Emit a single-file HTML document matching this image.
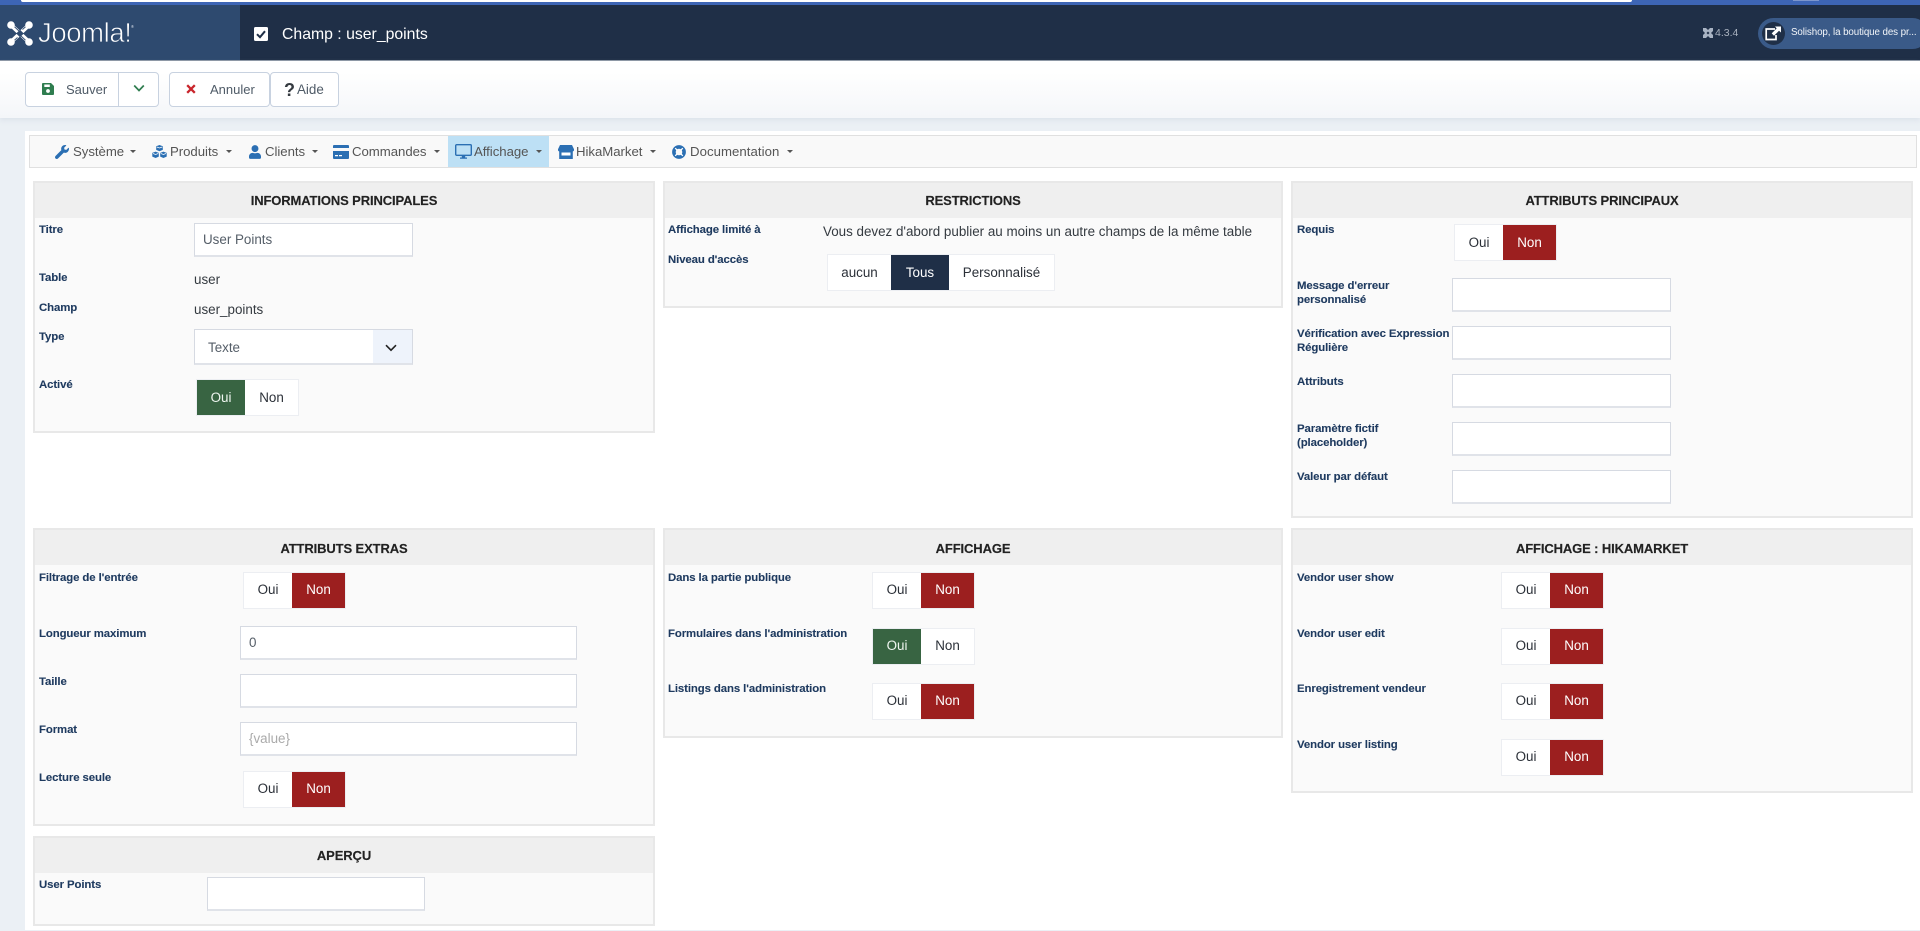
<!DOCTYPE html>
<html lang="fr"><head><meta charset="utf-8"><title>Champ : user_points</title>
<style>
*{box-sizing:border-box}
html,body{margin:0;padding:0;width:1920px;height:931px;overflow:hidden;background:#ebf0f5;font-family:"Liberation Sans",sans-serif}
.a,.l,.v,.h,.p,.tg,input,select,svg.i,.m,.c{position:absolute}
.a,.l,.v,.h,.m{white-space:nowrap}
.p{background:#fafafa;border:2px solid #e8e8e8}
.p>b{display:block;height:35px;background:#efefef;margin:0}
.h{font-weight:700;font-size:13px;line-height:16px;color:#222;text-align:center;letter-spacing:-.12px;-webkit-text-stroke:.15px #222;margin-top:.5px}
.l{font-weight:700;font-size:11.4px;line-height:14px;color:#1e3a5f;letter-spacing:-.1px;margin-top:.6px;-webkit-text-stroke:.1px #1e3a5f}
.v{font-size:13.4px;line-height:16px;color:#343a40;margin-top:1px}
input,select{background:#fff;border:1px solid #d6dae2;border-bottom:2px solid #e0e3e9;border-radius:0;height:34px;padding:0 8px;font:13.4px "Liberation Sans",sans-serif;color:#555e68;outline:none;margin:0}
input::placeholder{color:#aaa;opacity:1}
.tg{display:flex;height:37px;background:#fff;border:1px solid #eceef2;font-size:13.4px;line-height:35px;color:#2b3038;text-align:center}
.tg span{display:block;height:100%}
.tg .r{background:#9c1f1f;color:#fff}
.tg .g{background:#386442;color:#eef5ef}
.tg .d{background:#1f2f47;color:#fff}
.b{position:absolute;top:72px;height:35px;background:#fff;border:1px solid #c8d2e0;border-radius:4px}
.t{position:absolute;top:83px;line-height:14px;font-size:13px;color:#4f5b67;white-space:nowrap}
.m{top:144px;font-size:13.2px;line-height:16px;color:#555;letter-spacing:-.03px}
.c{top:150px;width:0;height:0;border-left:3px solid transparent;border-right:3px solid transparent;border-top:3.5px solid #555}
svg.i{fill:#2b6fb3}
</style></head><body>

<div class="a" style="left:0;top:0;width:1920px;height:5px;background:#3d65b5"></div>
<div class="a" style="left:21px;top:0;width:1611px;height:1.5px;background:#fff;border-radius:0 0 3px 3px"></div>
<div class="a" style="left:1793px;top:0;width:26px;height:1px;background:#7c95cc"></div>
<div class="a" style="left:0;top:5px;width:1920px;height:56px;background:#1f2f47;border-bottom:1px solid #8d97a5"></div>
<div class="a" style="left:0;top:5px;width:240px;height:55px;background:#2e4a6f"></div>

<svg class="i" style="left:7px;top:21px;fill:none" width="26" height="25" viewBox="0 0 26 25">
<g stroke="#fff" stroke-width="4.200" stroke-linecap="round" fill="none"><path d="M4.500 4.500L21.500 20.500M21.500 4.500L4.500 20.500"/></g>
<g fill="#fff"><circle cx="4" cy="4" r="3.800"/><circle cx="22" cy="4" r="3.800"/><circle cx="4" cy="21" r="3.800"/><circle cx="22" cy="21" r="3.800"/></g>
<path d="M13 8.800l3.800 3.700-3.800 3.700-3.800-3.700z" fill="#2e4a6f"/>
<path d="M7.500 5.800l5 4.700M18.500 19.200l-5-4.700M18.500 5.800l-3 2.800M7.500 19.200l3-2.800" stroke="#2e4a6f" stroke-width=".9" fill="none"/></svg>
<div class="a" style="left:38px;top:16px;font-size:27.5px;line-height:34px;color:#fff;letter-spacing:-.4px;-webkit-text-stroke:.7px #2e4a6f">Joomla!</div>
<div class="a" style="left:131px;top:24px;font-size:4px;line-height:5px;color:#dfe5ee">®</div>

<svg class="i" style="left:253px;top:26px;fill:none" width="16" height="16" viewBox="0 0 16 16"><rect x="1" y="1" width="14" height="14" rx="1.5" fill="#fff"/><path d="M4 8.200l3 3 5-6" stroke="#1f2f47" stroke-width="2" fill="none"/></svg>
<div class="a" style="left:282px;top:26px;font-size:15.8px;line-height:18px;color:#fff">Champ : user_points</div>

<svg class="i" style="left:1703px;top:28px;fill:#a9b4c4" width="10" height="10" viewBox="0 0 10 10"><path d="M0 0h3l2 2 2-2h3v3L8 5l2 2v3H7L5 8l-2 2H0V7l2-2-2-2z"/><path d="M5 3.500L6.500 5 5 6.500 3.500 5z" fill="#1f2f47"/></svg>
<div class="a" style="left:1715px;top:27px;font-size:10.5px;line-height:13px;color:#a9b2bf">4.3.4</div>
<div class="a" style="left:1758px;top:18px;width:170px;height:31px;border-radius:16px;background:#3a5a88"></div>
<div class="a" style="left:1762px;top:22px;width:23px;height:23px;border-radius:50%;background:#1f2f47"></div>
<svg class="i" style="left:1764px;top:26px;fill:none" width="18" height="15" viewBox="0 0 18 15"><path d="M11 3H2.200v10.500h9.800V9" stroke="#fff" stroke-width="1.700" fill="none"/><path d="M11 .5h6v6l-2-1.800-5 5-2.300-2.300 5-5z" fill="#fff"/></svg>
<div class="a" style="left:1791px;top:26px;font-size:9.8px;line-height:14px;letter-spacing:-.1px;color:#f2f5f9">Solishop, la boutique des pr...</div>

<div class="a" style="left:0;top:61px;width:1920px;height:57px;background:linear-gradient(#fff 20%,#f4f6f9);box-shadow:0 2px 5px rgba(170,185,205,.25)"></div>

<div class="b" style="left:25px;width:134px"></div>
<div class="a" style="left:118px;top:73px;width:1px;height:33px;background:#c8d2e0"></div>
<svg class="i" style="left:42px;top:83px;fill:#2f7d4f" width="12" height="12" viewBox="0 0 12 12"><path d="M0 1a1 1 0 0 1 1-1h8l3 3v8a1 1 0 0 1-1 1H1a1 1 0 0 1-1-1z"/><rect x="2.300" y="1.500" width="5.500" height="2.500" fill="#fff"/><circle cx="6" cy="8" r="1.900" fill="#fff"/></svg>
<div class="t" style="left:66px">Sauver</div>
<svg class="i" style="left:133px;top:84px;fill:none" width="12" height="9" viewBox="0 0 12 9"><path d="M1.200 1.500L6 6.500l4.800-5" stroke="#2f7d4f" stroke-width="1.700" fill="none"/></svg>
<div class="b" style="left:169px;width:101px"></div>
<svg class="i" style="left:186px;top:84px;fill:none" width="10" height="10" viewBox="0 0 10 10"><path d="M1.200 1.200l7.600 7.600M8.800 1.200L1.200 8.800" stroke="#c9252c" stroke-width="2.300"/></svg>
<div class="t" style="left:210px">Annuler</div>
<div class="b" style="left:270px;width:69px"></div>
<div class="t" style="left:284px;font-weight:700;font-size:18px;color:#343a40">?</div>
<div class="t" style="left:297px;font-size:13.4px">Aide</div>

<div class="a" style="left:25px;top:131px;width:1895px;height:799px;background:#fff"></div>

<div class="a" style="left:29px;top:135px;width:1888px;height:33px;background:#f9f9f9;border:1px solid #e0e0e0"></div>
<div class="a" style="left:448px;top:136px;width:101px;height:31px;background:#bde0f5"></div>

<svg class="i" style="left:55px;top:145px" width="14" height="14" viewBox="0 0 512 512"><path d="M507.730 109.100c-2.240-9.030-13.540-12.090-20.120-5.510l-74.360 74.360-67.880-11.310-11.310-67.880 74.360-74.360c6.620-6.620 3.430-17.900-5.660-20.160-47.380-11.740-99.550.91-136.580 37.930-39.640 39.640-50.550 97.100-34.050 147.200L18.740 402.760c-24.990 24.990-24.990 65.510 0 90.500 24.990 24.990 65.510 24.990 90.500 0l213.210-213.210c50.120 16.710 107.470 5.680 147.370-34.220 37.070-37.070 49.700-89.320 37.910-136.730z"/></svg>
<div class="m" style="left:73px">Système</div><div class="c" style="left:130px"></div>

<svg class="i" style="left:152px;top:145px" width="15" height="14" viewBox="0 0 15 14"><path d="M7.500 0l3.300 1.300v3.600L7.500 6.300 4.200 4.900V1.300zM3.600 6.600l3.200 1.300v3.700l-3.200 1.400L.3 11.600V7.900zM11.400 6.600l3.300 1.300v3.700L11.400 13l-3.200-1.400V7.900z"/><path d="M4.800 2l2.700 1 2.700-1M1 8.500l2.600 1 2.600-1M8.800 8.500l2.600 1 2.600-1" stroke="#fff" stroke-width=".7" fill="none"/></svg>
<div class="m" style="left:170px">Produits</div><div class="c" style="left:226px"></div>

<svg class="i" style="left:249px;top:145px" width="12" height="14" viewBox="0 0 448 512"><path d="M224 256c70.700 0 128-57.300 128-128S294.700 0 224 0 96 57.300 96 128s57.300 128 128 128zm89.600 32h-16.700c-22.200 10.200-46.900 16-72.900 16s-50.600-5.800-72.900-16h-16.700C60.200 288 0 348.200 0 422.400V464c0 26.500 21.500 48 48 48h352c26.500 0 48-21.500 48-48v-41.600c0-74.200-60.200-134.400-134.400-134.400z"/></svg>
<div class="m" style="left:265px">Clients</div><div class="c" style="left:312px"></div>

<svg class="i" style="left:333px;top:145px" width="16" height="14" viewBox="0 0 16 14"><path d="M1 0h14a1 1 0 0 1 1 1v2H0V1a1 1 0 0 1 1-1zM0 6h16v7a1 1 0 0 1-1 1H1a1 1 0 0 1-1-1z"/><path d="M2 10h3v1.300H2zM6 10h3v1.300H6z" fill="#fff"/></svg>
<div class="m" style="left:352px">Commandes</div><div class="c" style="left:434px"></div>

<svg class="i" style="left:455px;top:144px;fill:none" width="17" height="15" viewBox="0 0 17 15"><rect x=".7" y=".7" width="15.600" height="10.600" rx="1" stroke="#2b6fb3" stroke-width="1.400" fill="none"/><path d="M6.800 11.500h3.400v2H12v1.200H5v-1.200h1.800z" fill="#2b6fb3"/></svg>
<div class="m" style="left:474px">Affichage</div><div class="c" style="left:536px"></div>

<svg class="i" style="left:558px;top:145px" width="16" height="14" viewBox="0 0 16 14"><path d="M2 0h12l2 4.200a2 2 0 0 1-1.200 2.300V14H1.200V6.500A2 2 0 0 1 0 4.200z"/><rect x="3.500" y="7.500" width="9" height="3" fill="#fff"/></svg>
<div class="m" style="left:576px">HikaMarket</div><div class="c" style="left:650px"></div>

<svg class="i" style="left:672px;top:145px;fill:none" width="14" height="14" viewBox="0 0 14 14"><circle cx="7" cy="7" r="5.100" stroke="#2b6fb3" stroke-width="3.600" fill="none"/><path d="M3.200 3.200l2 2M10.800 3.200l-2 2M3.200 10.800l2-2M10.800 10.800l-2-2" stroke="#fff" stroke-width="1.300"/></svg>
<div class="m" style="left:690px;letter-spacing:.05px">Documentation</div><div class="c" style="left:787px"></div>

<!-- INFORMATIONS PRINCIPALES -->
<div class="p" style="left:33px;top:181px;width:622px;height:252px"><b></b></div>
<div class="h" style="left:33px;top:192px;width:622px">INFORMATIONS PRINCIPALES</div>
<div class="l" style="left:39px;top:222px">Titre</div>
<input style="left:194px;top:223px;width:219px" value="User Points">
<div class="l" style="left:39px;top:270px">Table</div>
<div class="v" style="left:194px;top:271px">user</div>
<div class="l" style="left:39px;top:300px">Champ</div>
<div class="v" style="left:194px;top:301px">user_points</div>
<div class="l" style="left:39px;top:329px">Type</div>
<div class="a" style="left:194px;top:329px;width:219px;height:36px;background:#fff;border:1px solid #d6dae2;border-bottom:2px solid #e0e3e9"></div>
<div class="a" style="left:373px;top:330px;width:39px;height:33px;background:#eef3fb"></div>
<div class="v" style="left:208px;top:339px;color:#555e68">Texte</div>
<svg class="i" style="left:385px;top:344px;fill:none" width="12" height="8" viewBox="0 0 12 8"><path d="M1 1.200l5 5 5-5" stroke="#222" stroke-width="1.600" fill="none"/></svg>
<div class="l" style="left:39px;top:377px">Activé</div>
<div class="tg" style="left:196px;top:379px;width:103px"><span class="g" style="width:48px">Oui</span><span style="width:53px">Non</span></div>

<!-- RESTRICTIONS -->
<div class="p" style="left:663px;top:181px;width:620px;height:127px"><b></b></div>
<div class="h" style="left:663px;top:192px;width:620px">RESTRICTIONS</div>
<div class="l" style="left:668px;top:222px">Affichage limité à</div>
<div class="v" style="left:823px;top:223px">Vous devez d'abord publier au moins un autre champs de la même table</div>
<div class="l" style="left:668px;top:252px">Niveau d'accès</div>
<div class="tg" style="left:827px;top:254px;width:228px"><span style="width:63px">aucun</span><span class="d" style="width:58px">Tous</span><span style="width:105px">Personnalisé</span></div>

<!-- ATTRIBUTS PRINCIPAUX -->
<div class="p" style="left:1291px;top:181px;width:622px;height:337px"><b></b></div>
<div class="h" style="left:1291px;top:192px;width:622px">ATTRIBUTS PRINCIPAUX</div>
<div class="l" style="left:1297px;top:222px">Requis</div>
<div class="tg" style="left:1454px;top:224px;width:103px"><span style="width:48px">Oui</span><span class="r" style="width:53px">Non</span></div>
<div class="l" style="left:1297px;top:278px">Message d'erreur<br>personnalisé</div>
<input style="left:1452px;top:278px;width:219px">
<div class="l" style="left:1297px;top:326px">Vérification avec Expression<br>Régulière</div>
<input style="left:1452px;top:326px;width:219px">
<div class="l" style="left:1297px;top:374px">Attributs</div>
<input style="left:1452px;top:374px;width:219px">
<div class="l" style="left:1297px;top:421px">Paramètre fictif<br>(placeholder)</div>
<input style="left:1452px;top:422px;width:219px">
<div class="l" style="left:1297px;top:469px">Valeur par défaut</div>
<input style="left:1452px;top:470px;width:219px">

<!-- ATTRIBUTS EXTRAS -->
<div class="p" style="left:33px;top:528px;width:622px;height:298px"><b></b></div>
<div class="h" style="left:33px;top:540px;width:622px">ATTRIBUTS EXTRAS</div>
<div class="l" style="left:39px;top:570px">Filtrage de l'entrée</div>
<div class="tg" style="left:243px;top:572px;width:103px;line-height:34px"><span style="width:48px">Oui</span><span class="r" style="width:53px">Non</span></div>
<div class="l" style="left:39px;top:626px">Longueur maximum</div>
<input style="left:240px;top:626px;width:337px" value="0">
<div class="l" style="left:39px;top:674px">Taille</div>
<input style="left:240px;top:674px;width:337px">
<div class="l" style="left:39px;top:722px">Format</div>
<input style="left:240px;top:722px;width:337px" placeholder="{value}">
<div class="l" style="left:39px;top:770px">Lecture seule</div>
<div class="tg" style="left:243px;top:771px;width:103px;line-height:34px"><span style="width:48px">Oui</span><span class="r" style="width:53px">Non</span></div>

<!-- AFFICHAGE -->
<div class="p" style="left:663px;top:528px;width:620px;height:210px"><b></b></div>
<div class="h" style="left:663px;top:540px;width:620px">AFFICHAGE</div>
<div class="l" style="left:668px;top:570px">Dans la partie publique</div>
<div class="tg" style="left:872px;top:572px;width:103px;line-height:34px"><span style="width:48px">Oui</span><span class="r" style="width:53px">Non</span></div>
<div class="l" style="left:668px;top:626px">Formulaires dans l'administration</div>
<div class="tg" style="left:872px;top:628px;width:103px;line-height:34px"><span class="g" style="width:48px">Oui</span><span style="width:53px">Non</span></div>
<div class="l" style="left:668px;top:681px">Listings dans l'administration</div>
<div class="tg" style="left:872px;top:683px;width:103px;line-height:34px"><span style="width:48px">Oui</span><span class="r" style="width:53px">Non</span></div>

<!-- AFFICHAGE : HIKAMARKET -->
<div class="p" style="left:1291px;top:528px;width:622px;height:265px"><b></b></div>
<div class="h" style="left:1291px;top:540px;width:622px">AFFICHAGE : HIKAMARKET</div>
<div class="l" style="left:1297px;top:570px">Vendor user show</div>
<div class="tg" style="left:1501px;top:572px;width:103px;line-height:34px"><span style="width:48px">Oui</span><span class="r" style="width:53px">Non</span></div>
<div class="l" style="left:1297px;top:626px">Vendor user edit</div>
<div class="tg" style="left:1501px;top:628px;width:103px;line-height:34px"><span style="width:48px">Oui</span><span class="r" style="width:53px">Non</span></div>
<div class="l" style="left:1297px;top:681px">Enregistrement vendeur</div>
<div class="tg" style="left:1501px;top:683px;width:103px;line-height:34px"><span style="width:48px">Oui</span><span class="r" style="width:53px">Non</span></div>
<div class="l" style="left:1297px;top:737px">Vendor user listing</div>
<div class="tg" style="left:1501px;top:739px;width:103px;line-height:34px"><span style="width:48px">Oui</span><span class="r" style="width:53px">Non</span></div>

<!-- APERÇU -->
<div class="p" style="left:33px;top:836px;width:622px;height:90px"><b></b></div>
<div class="h" style="left:33px;top:847px;width:622px">APERÇU</div>
<div class="l" style="left:39px;top:877px">User Points</div>
<input style="left:207px;top:877px;width:218px">

</body></html>
